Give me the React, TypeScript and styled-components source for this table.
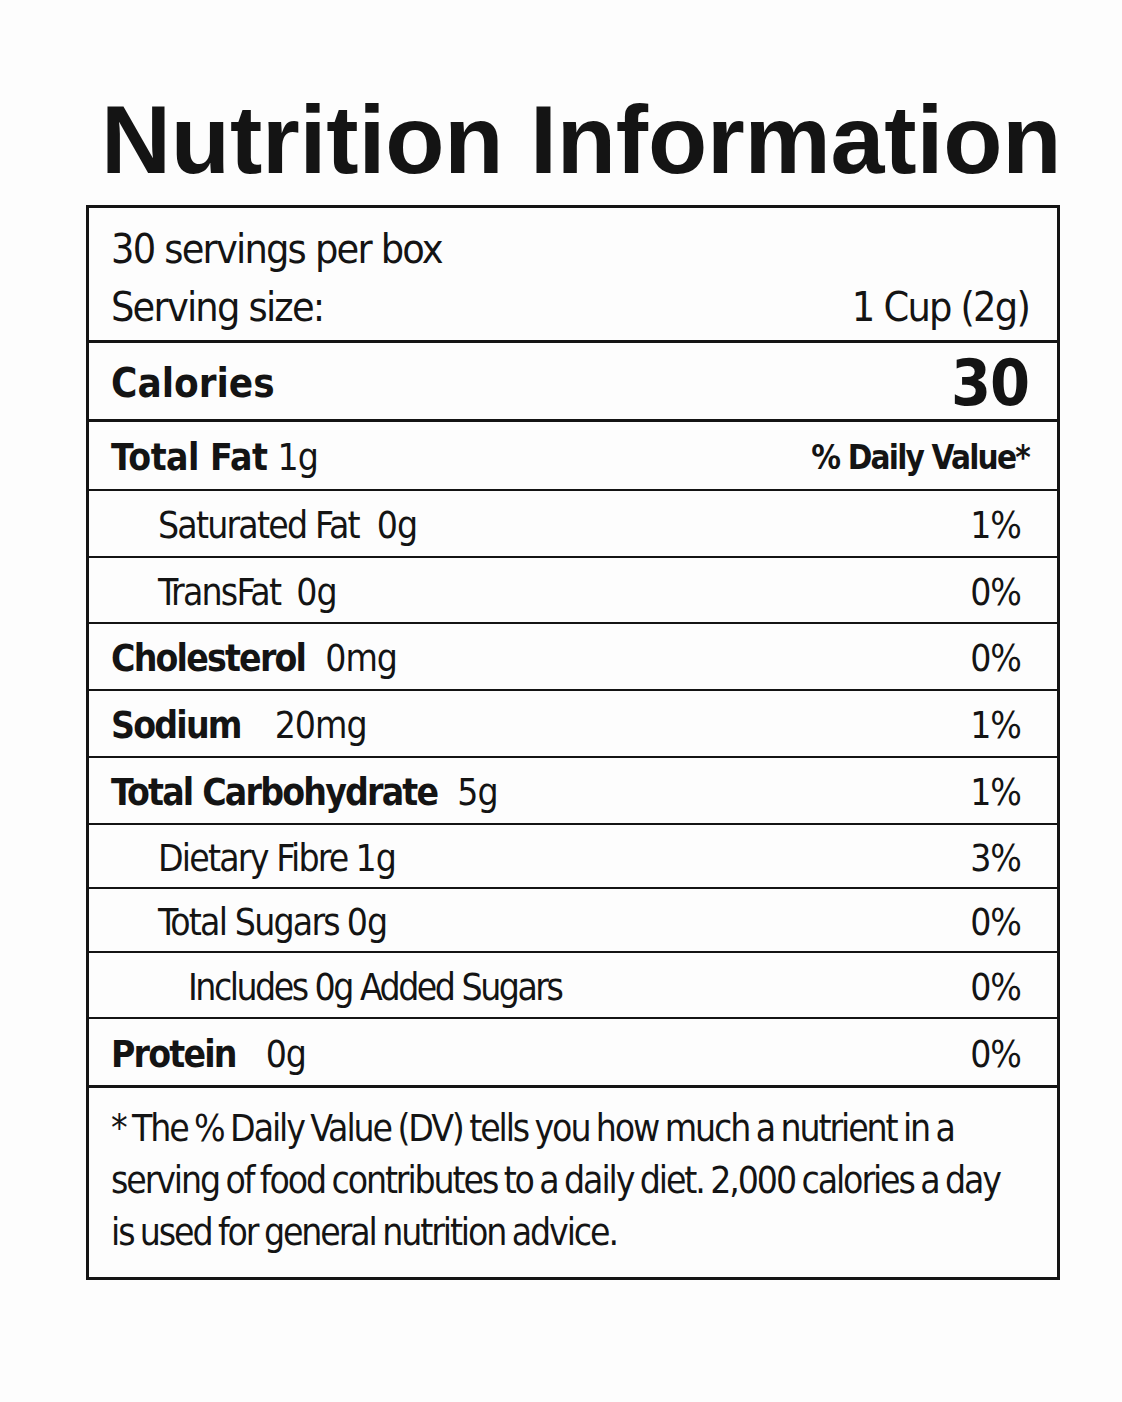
import React from "react";
import styled, { createGlobalStyle } from "styled-components";

const Global = createGlobalStyle`
  html, body { margin: 0; padding: 0; background: #fdfdfd; }
  body { font-family: "DejaVu Sans Condensed", "DejaVu Sans", sans-serif; color: #141414; }
`;

const Page = styled.div`
  width: 1122px;
  height: 1402px;
  box-sizing: border-box;
  padding: 85px 0 0 86px;
`;

const Title = styled.h1`
  margin: 0 0 0 15px;
  font-family: "Liberation Sans", Arial, sans-serif;
  font-weight: 700;
  font-size: 97px;
  line-height: 110px;
  letter-spacing: -0.2px;
  color: #141414;
  white-space: nowrap;
`;

const Label = styled.div`
  margin-top: 10px;
  width: 974px;
  box-sizing: border-box;
  border: 3px solid #141414;
  display: flex;
  flex-direction: column;
`;

const ServingBlock = styled.div`
  height: 135px;
  box-sizing: border-box;
  padding: 12px 28px 0 22px;
  border-bottom: 3px solid #141414;
  font-size: 41px;
  letter-spacing: -1.8px;
`;

const ServingLine = styled.div`
  display: flex;
  justify-content: space-between;
  align-items: baseline;
  height: 58px;
  line-height: 58px;
`;

const Row = styled.div<{ $h: number; $thick?: boolean; $indent?: number; $pr?: number }>`
  height: ${(p) => p.$h}px;
  box-sizing: border-box;
  display: flex;
  align-items: center;
  justify-content: space-between;
  padding: 4px ${(p) => p.$pr ?? 36}px 0 ${(p) => 22 + (p.$indent ?? 0)}px;
  border-bottom: ${(p) => (p.$thick ? 3 : 2)}px solid #141414;
  font-size: 37px;
  letter-spacing: -1px;
  white-space: nowrap;
`;

const Name = styled.span<{ $bold?: boolean; $tight?: boolean }>`
  font-weight: ${(p) => (p.$bold ? 700 : 400)};
  letter-spacing: ${(p) => (p.$bold ? "-1.8px" : p.$tight ? "-2.5px" : "-1.8px")};
`;

const Amount = styled.span<{ $gap?: number }>`
  margin-left: ${(p) => p.$gap ?? 10}px;
`;

const CalLabel = styled.span`
  font-weight: 700;
  font-size: 40px;
  letter-spacing: 0;
`;

const CalValue = styled.span`
  font-weight: 700;
  font-size: 64px;
  letter-spacing: -1px;
`;

const FatName = styled.span`
  font-weight: 700;
  letter-spacing: -0.5px;
`;

const DV = styled.span`
  font-weight: 700;
  font-size: 33px;
  letter-spacing: -1.8px;
`;

const Footnote = styled.div`
  padding: 15px 20px 20px 22px;
  height: 189px;
  box-sizing: border-box;
  font-size: 37px;
  line-height: 52px;
  letter-spacing: -2.1px;
  word-spacing: -2px;
  white-space: nowrap;
`;

const FootLine = styled.div``;

const nutrients = [
  { name: "Saturated Fat", amt: "0g", dv: "1%", indent: 47, gap: 18, h: 67 },
  { name: "TransFat", amt: "0g", dv: "0%", indent: 47, gap: 16, h: 66 },
  { name: "Cholesterol", amt: "0mg", dv: "0%", bold: true, gap: 20, h: 67 },
  { name: "Sodium", amt: "20mg", dv: "1%", bold: true, gap: 34, h: 67 },
  { name: "Total Carbohydrate", amt: "5g", dv: "1%", bold: true, gap: 20, h: 67 },
  { name: "Dietary Fibre", amt: "1g", dv: "3%", indent: 47, gap: 8, h: 64 },
  { name: "Total Sugars", amt: "0g", dv: "0%", indent: 47, gap: 8, h: 64 },
  { name: "Includes 0g Added Sugars", amt: "", dv: "0%", indent: 77, gap: 0, h: 66, tight: true },
  { name: "Protein", amt: "0g", dv: "0%", bold: true, gap: 30, h: 69, thick: true },
];

export default function App() {
  return (
    <>
      <Global />
      <Page>
        <Title>Nutrition Information</Title>
        <Label>
          <ServingBlock>
            <ServingLine>
              <span>30 servings per box</span>
            </ServingLine>
            <ServingLine>
              <span>Serving size:</span>
              <span>1 Cup (2g)</span>
            </ServingLine>
          </ServingBlock>
          <Row $h={79} $thick $pr={28}>
            <CalLabel>Calories</CalLabel>
            <CalValue>30</CalValue>
          </Row>
          <Row $h={69} $pr={28}>
            <span>
              <FatName>Total Fat</FatName>
              <Amount $gap={10}>1g</Amount>
            </span>
            <DV>% Daily Value*</DV>
          </Row>
          {nutrients.map((n) => (
            <Row key={n.name} $h={n.h} $indent={n.indent} $thick={n.thick}>
              <span>
                <Name $bold={n.bold} $tight={n.tight}>
                  {n.name}
                </Name>
                {n.amt && <Amount $gap={n.gap}>{n.amt}</Amount>}
              </span>
              <span>{n.dv}</span>
            </Row>
          ))}
          <Footnote>
            <FootLine>* The % Daily Value (DV) tells you how much a nutrient in a</FootLine>
            <FootLine>serving of food contributes to a daily diet. 2,000 calories a day</FootLine>
            <FootLine>is used for general nutrition advice.</FootLine>
          </Footnote>
        </Label>
      </Page>
    </>
  );
}
